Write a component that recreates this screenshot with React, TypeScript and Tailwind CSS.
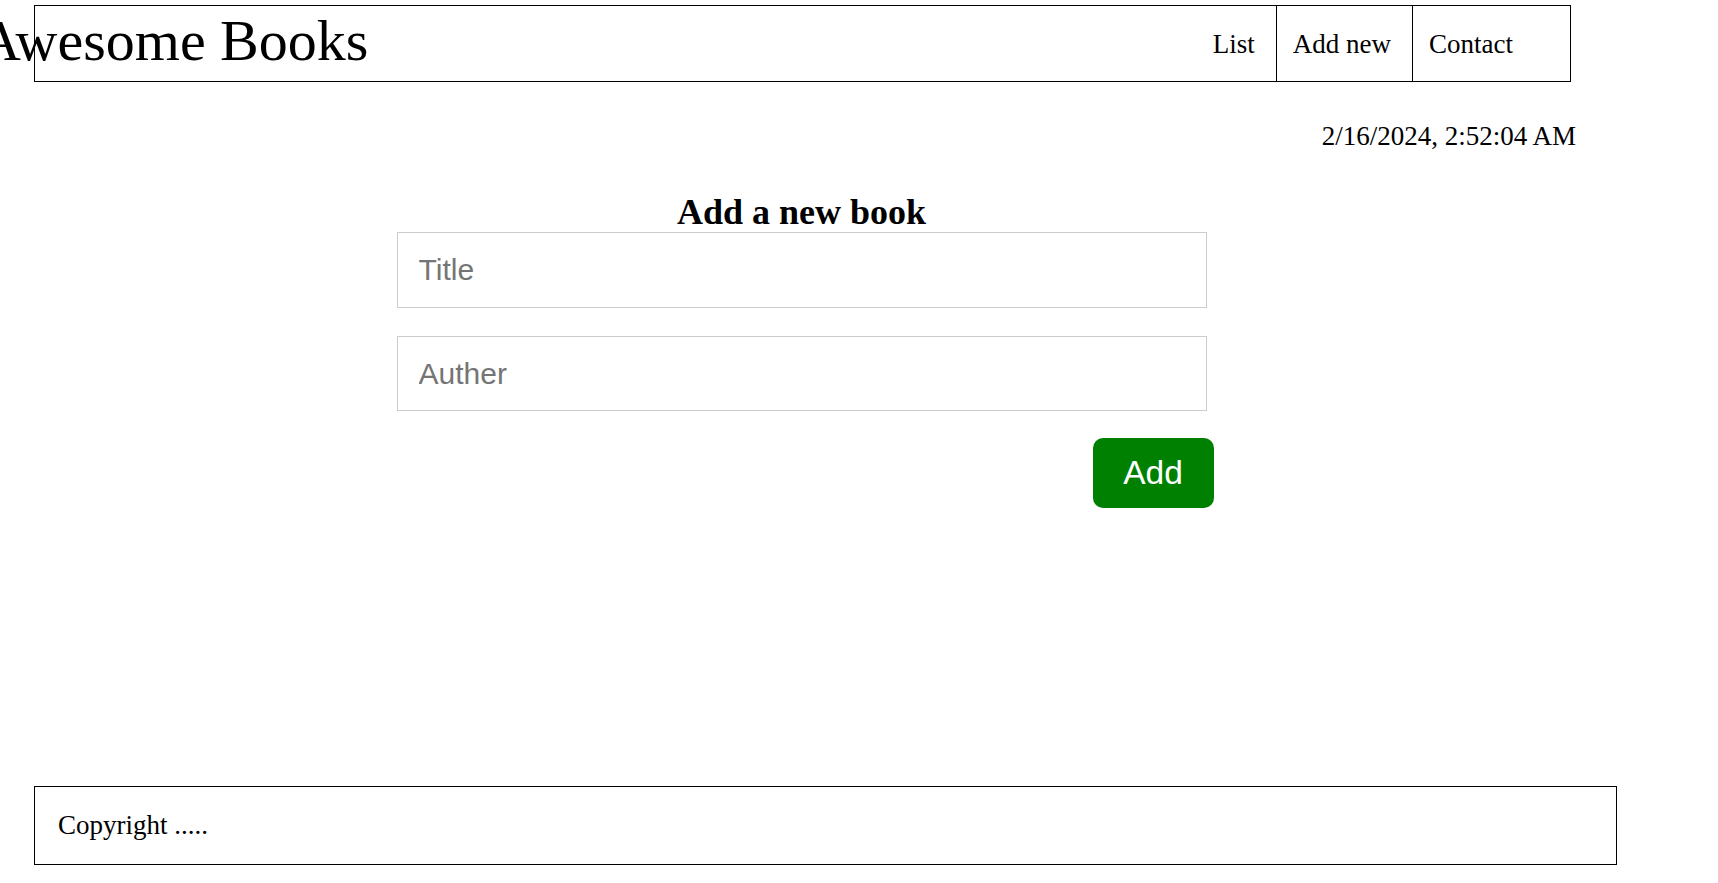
import { useState } from 'react';

const navItems = ['List', 'Add new', 'Contact'];

export default function App() {
  const [title, setTitle] = useState('');
  const [author, setAuthor] = useState('');

  return (
    <div className="h-screen flex flex-col pl-[34px] bg-white text-black overflow-hidden font-['Liberation_Serif','Times_New_Roman',serif]">
      {/* Header */}
      <header className="mt-[5px] w-[1537px] h-[77px] shrink-0 border border-black flex items-stretch justify-between">
        <h1 className="ml-[-56px] self-center pb-[5px] text-[58px] leading-none font-normal whitespace-nowrap">
          Awesome Books
        </h1>
        <ul className="flex items-stretch text-[27px] leading-none pr-[36px]">
          {navItems.map((item, i) => (
            <li
              key={item}
              className={
                'flex items-center pt-[1px] pr-[21px] ' +
                (i === 0 ? '' : 'pl-[16px] border-l border-black')
              }
            >
              {item}
            </li>
          ))}
        </ul>
      </header>

      {/* Date */}
      <p className="w-[1542px] mt-[41px] text-right text-[27px] leading-none">
        2/16/2024, 2:52:04 AM
      </p>

      {/* Add new book form */}
      <section className="w-[1535px] flex flex-col items-center">
        <h2 className="mt-[44px] text-[36px] leading-none font-bold">Add a new book</h2>
        <form
          className="mt-[2px] w-[810px] flex flex-col font-['Liberation_Sans',Arial,sans-serif]"
          onSubmit={(e) => e.preventDefault()}
        >
          <input
            type="text"
            value={title}
            onChange={(e) => setTitle(e.target.value)}
            placeholder="Title"
            className="h-[76px] w-full border border-[#cccccc] px-[21px] text-[30px] outline-none placeholder:text-[#757575]"
          />
          <input
            type="text"
            value={author}
            onChange={(e) => setAuthor(e.target.value)}
            placeholder="Auther"
            className="mt-[28px] h-[75px] w-full border border-[#cccccc] px-[21px] text-[30px] outline-none placeholder:text-[#757575]"
          />
          <button
            type="submit"
            className="mt-[27px] self-end mr-[-7px] w-[121px] h-[70px] rounded-[10px] bg-[#008000] text-white text-[33.5px] leading-none"
          >
            Add
          </button>
        </form>
      </section>

      {/* Footer */}
      <footer className="mt-auto mb-[18px] w-[1583px] h-[79px] shrink-0 border border-black flex items-center pl-[23px] text-[27px] leading-none">
        Copyright .....
      </footer>
    </div>
  );
}
